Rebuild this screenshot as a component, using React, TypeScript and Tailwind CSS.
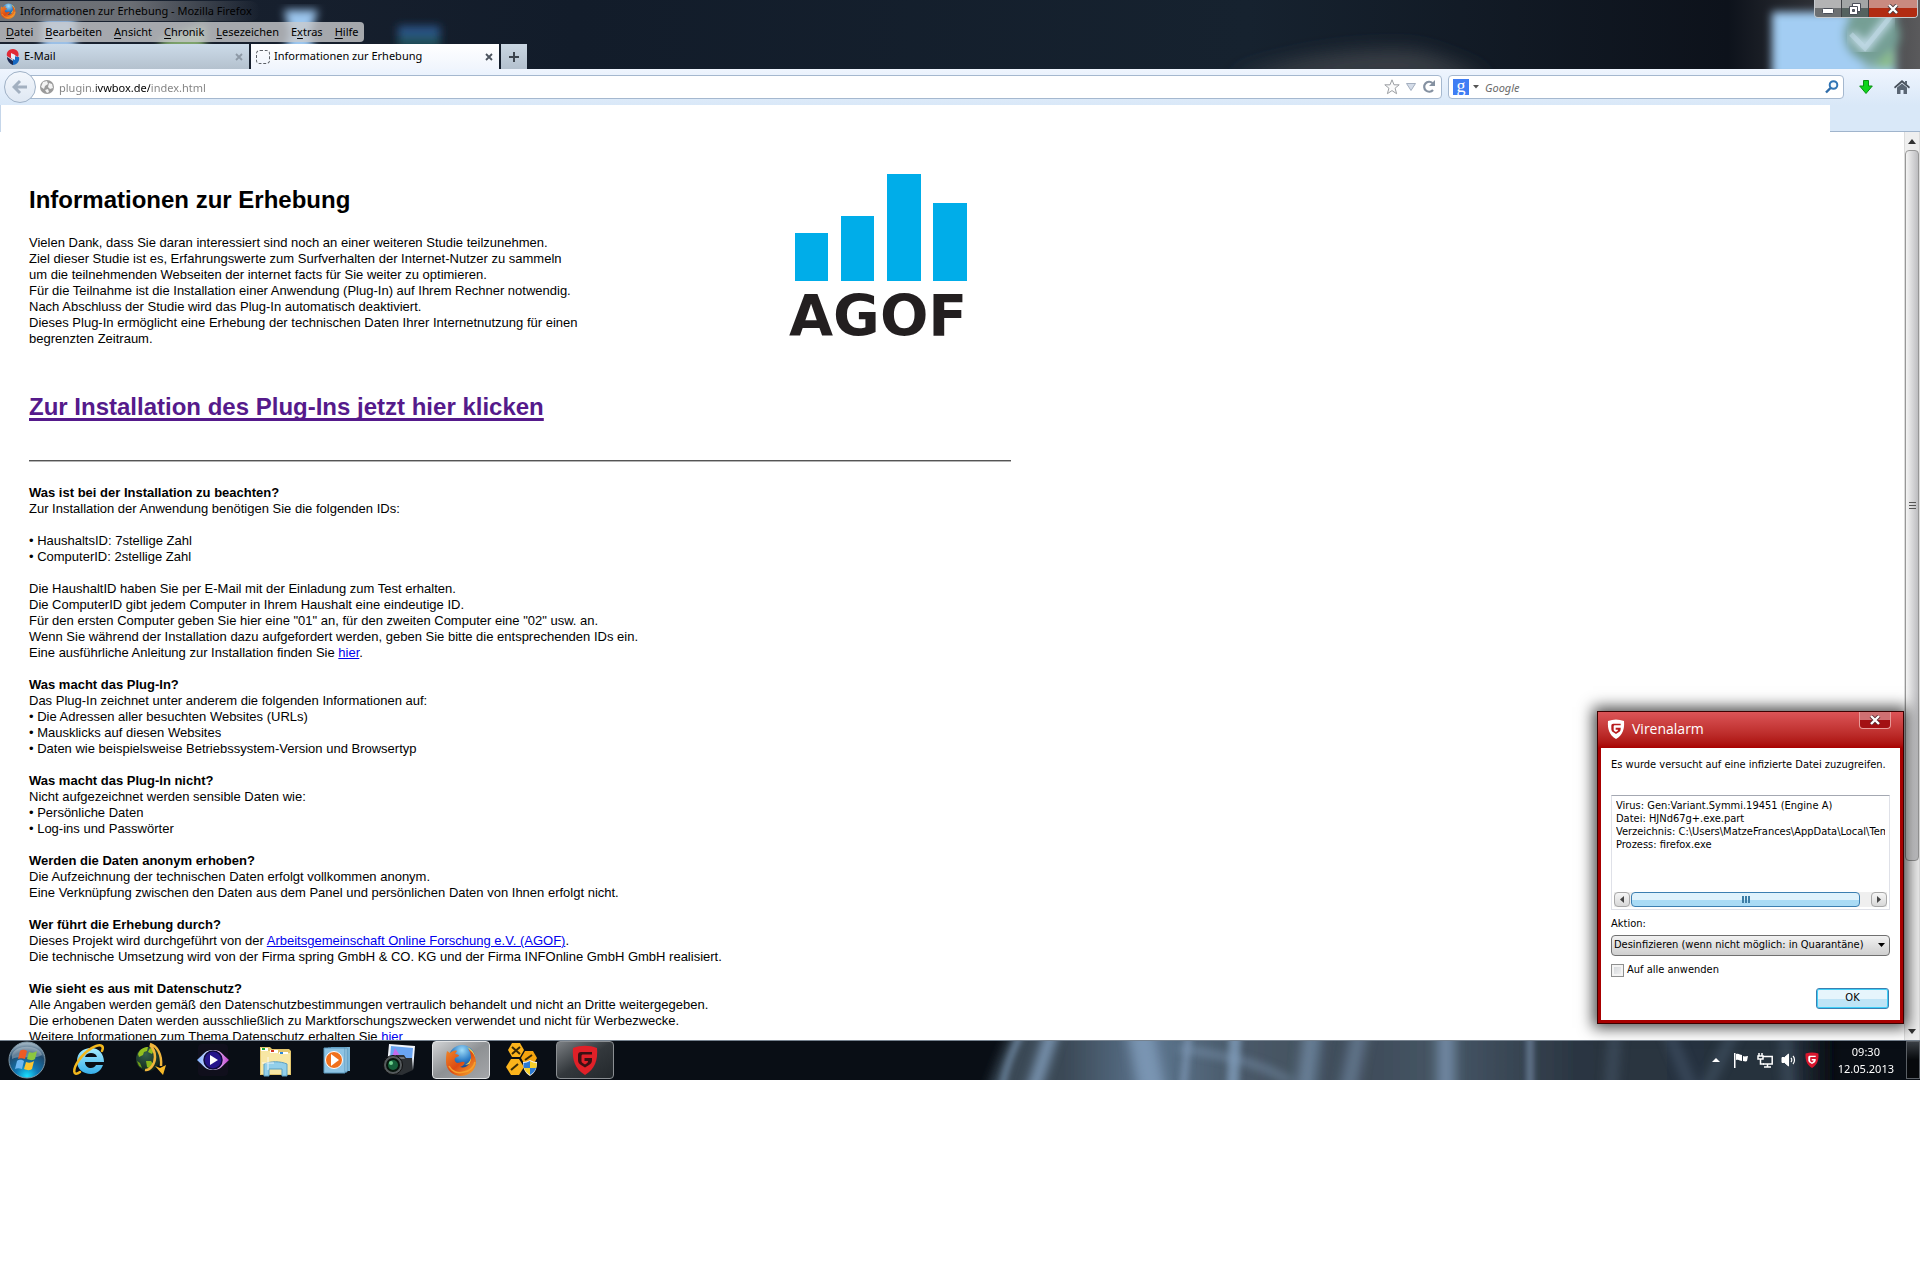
import { Fragment } from "react";
import type { ReactNode } from "react";

const menuItems = [
  { before: "", key: "D", rest: "atei" },
  { before: "", key: "B", rest: "earbeiten" },
  { before: "", key: "A", rest: "nsicht" },
  { before: "", key: "C", rest: "hronik" },
  { before: "", key: "L", rest: "esezeichen" },
  { before: "E", key: "x", rest: "tras" },
  { before: "", key: "H", rest: "ilfe" },
];

const virusDetails = [
  "Virus: Gen:Variant.Symmi.19451 (Engine A)",
  "Datei: HJNd67g+.exe.part",
  "Verzeichnis: C:\\Users\\MatzeFrances\\AppData\\Local\\Temp",
  "Prozess: firefox.exe",
].join("\n");

/* ---------- Icons ---------- */

function FirefoxIcon({ className }: { className: string }) {
  return (
    <svg viewBox="0 0 32 32" className={className} aria-hidden="true">
      <defs>
        <radialGradient id="ffGlobe" cx="0.5" cy="0.2" r="0.8">
          <stop offset="0" stopColor="#9fdcf8" />
          <stop offset="0.5" stopColor="#2f7fc8" />
          <stop offset="1" stopColor="#0a2c72" />
        </radialGradient>
        <linearGradient id="ffFox" x1="0" y1="0" x2="1" y2="1">
          <stop offset="0" stopColor="#f08a2a" />
          <stop offset="0.5" stopColor="#dd4a12" />
          <stop offset="1" stopColor="#f9b233" />
        </linearGradient>
      </defs>
      <circle cx="17" cy="14" r="13" fill="url(#ffGlobe)" />
      <path d="M22 3c4 3 5 7 4 11-1 4-4 6-6 7l9-2c3-6 0-13-7-16z" fill="#f8d24a" />
      <path
        d="M2 7l3 2c2-2 5-3 7-2l-2 3c3 0 4 1 4 2l-4 2c-1 2 0 4 2 5 3 0 5-2 7-1 2 1-1 4-4 5 6 2 11-3 11-9 0-4-1-7-3-9 5 3 8 8 8 13 0 8-7 14-15 14S1 26 1 18c0-4 0-7 1-11z"
        fill="url(#ffFox)"
      />
      <path d="M4 22c3 6 9 8 15 6 6-1 10-5 11-10" fill="none" stroke="#f6a02d" strokeWidth="1.500" />
    </svg>
  );
}

function GShield({ className, fill, mark }: { className: string; fill: string; mark: string }) {
  return (
    <svg viewBox="0 0 26 30" className={className} aria-hidden="true">
      <path d="M1 3C9 0 17 0 25 3c1 12-2 21-12 27C3 24 0 15 1 3z" fill={fill} />
      <path
        d="M20 9.500V7H9c-2 0-3 1-3 3v5c0 2 1 4 3 5l4 2.500 4-2.500c2-1 3-3 3-5v-2h-7.500v3H16c0 1-.5 2-1.500 2.500L13 19.500l-2-1.200c-1-.6-1.500-1.300-1.500-2.300v-5c0-1 .5-1.500 1.500-1.500z"
        fill={mark}
      />
    </svg>
  );
}

function StartOrb() {
  return (
    <svg viewBox="0 0 38 38" className="size-[38px]" aria-hidden="true">
      <defs>
        <radialGradient id="orb" cx="0.5" cy="0.95" r="0.9">
          <stop offset="0" stopColor="#18e0ff" />
          <stop offset="0.35" stopColor="#1178b4" />
          <stop offset="0.75" stopColor="#20496c" />
          <stop offset="1" stopColor="#9bb0bf" />
        </radialGradient>
      </defs>
      <circle cx="19" cy="19" r="18" fill="url(#orb)" stroke="#7f98a8" />
      <path d="M4 14C7 3 31 3 34 14c-8 5-22 0-30 4z" fill="#fff" opacity="0.3" />
      <path d="M12 10c3-2 5-1 7 0l-2 8c-3-1-5-1-7 0z" fill="#ee5a24" />
      <path d="M21 11c3 1 5 1 8-1l-2 8c-3 2-5 1-8 0z" fill="#8cc63f" />
      <path d="M9 20c3-2 5-1 7 0l-2 8c-3-1-5-1-7 0z" fill="#6db7f2" />
      <path d="M18 21c3 1 5 1 8-1l-2 8c-3 2-5 1-8 0z" fill="#fdc62f" />
    </svg>
  );
}

function ExplorerE() {
  return (
    <svg viewBox="0 0 36 36" className="size-9" aria-hidden="true">
      <defs>
        <linearGradient id="ie" x1="0" y1="0" x2="0" y2="1">
          <stop offset="0" stopColor="#a6ecff" />
          <stop offset="1" stopColor="#36aee9" />
        </linearGradient>
      </defs>
      <path
        d="M33 20H14c0 4 3 6 6 6 2 0 4-1 5-3h7c-2 6-7 9-12 9-8 0-14-5-14-13S12 6 20 6s13 6 13 14zm-7-5c-1-3-3-4-6-4s-5 1-6 4z"
        fill="url(#ie)"
      />
      <path
        d="M9 30C2 35 1 28 8 18 15 8 27 1 31 4c1 1 1 3 0 5"
        fill="none"
        stroke="#f2b71c"
        strokeWidth="2.500"
        strokeLinecap="round"
      />
    </svg>
  );
}

function DownloadManagerIcon() {
  return (
    <svg viewBox="0 0 36 36" className="size-9" aria-hidden="true">
      <defs>
        <radialGradient id="idm" cx="0.4" cy="0.3" r="0.7">
          <stop offset="0" stopColor="#35614b" />
          <stop offset="1" stopColor="#10261c" />
        </radialGradient>
      </defs>
      <circle cx="15" cy="17" r="12" fill="url(#idm)" />
      <path d="M5 12c2-5 6-7 10-7l-1 4-3 1-1 3-4 2z" fill="#93c01f" />
      <path d="M17 6l4 2-2 4-4-2z" fill="#93c01f" />
      <path d="M13 19l5 0 2 3-3 5-3-2z" fill="#86b41c" />
      <path d="M4 19l3 2 2 5-3-2z" fill="#6f9c17" />
      <path
        d="M12 28c5 1 10-6 10-13 0-5-2-9-5-12M17 2c7 2 12 10 11 22"
        fill="none"
        stroke="#f0b53c"
        strokeWidth="2.500"
      />
      <path d="M22 24l5 2 6-3-3 10z" fill="#f7b928" />
    </svg>
  );
}

function MediaEyeIcon() {
  return (
    <svg viewBox="0 0 36 36" className="size-9" aria-hidden="true">
      <defs>
        <linearGradient id="eye" x1="0" y1="0" x2="1" y2="0">
          <stop offset="0" stopColor="#7fb0ff" />
          <stop offset="0.5" stopColor="#f0ecff" />
          <stop offset="1" stopColor="#c43fd0" />
        </linearGradient>
      </defs>
      <rect x="3" y="2" width="30" height="32" rx="4" fill="#100f1c" />
      <path d="M2 18C9 12 10 8 18 8s9 4 16 10c-7 6-8 10-16 10S9 24 2 18z" fill="url(#eye)" />
      <circle cx="18" cy="18" r="9" fill="#25148a" stroke="#0e0a3c" strokeWidth="1.500" />
      <path d="M15 13v10l8-5z" fill="#fff" />
    </svg>
  );
}

function FolderIcon() {
  return (
    <svg viewBox="0 0 36 36" className="size-9" aria-hidden="true">
      <path d="M3 5h10l2 2h17l2 2v24H3z" fill="#e3c66d" />
      <path d="M4 9h9l2 2h18v21H4z" fill="#f8e7a4" />
      <path d="M4 6h7v3H4zM13 8h8v3h-8zM22 10h9v2h-9z" fill="#fff" />
      <path d="M5 6h3v2H5z" fill="#20a838" />
      <path d="M14 8h3v2h-3z" fill="#d33a24" />
      <path d="M23 10h3v2h-3z" fill="#2b86d9" />
      <path d="M7 22c7-3 16-3 23 0v12h-5v-7H12v7H7z" fill="#92cfea" stroke="#5b9fc2" />
      <path d="M11 15v13M5 21h12" stroke="#fff" opacity="0.8" />
    </svg>
  );
}

function PlayerIcon() {
  return (
    <svg viewBox="0 0 36 36" className="size-9" aria-hidden="true">
      <path d="M12 5h19v24H12z" fill="#79b4d6" />
      <path d="M9 6h19v24H9z" fill="#b6dcf0" stroke="#5b98bd" />
      <path d="M5 6h21v25H5z" fill="#8ec4e4" stroke="#5b98bd" />
      <circle cx="15" cy="18" r="8.500" fill="#f0701c" stroke="#fff" strokeWidth="1" />
      <path d="M12 12v12l8-6z" fill="#fff" />
    </svg>
  );
}

function CameraIcon() {
  return (
    <svg viewBox="0 0 36 36" className="size-9" aria-hidden="true">
      <path d="M8 2l26 2-2 24-26-4z" fill="#f1f5fb" />
      <path d="M10 4l22 2-1 12-22-2z" fill="#6aa5f2" />
      <path d="M14 6l6 9h-9z" fill="#c56bea" />
      <path d="M8 16h5l2-3h8l2 3h6l1 12-11 5-13-1z" fill="#2c3034" />
      <path d="M14 15h9l1 2H13z" fill="#6b7075" />
      <circle cx="12" cy="23" r="9.500" fill="#54595c" stroke="#0e0f10" />
      <circle cx="12" cy="23" r="7" fill="#08140d" />
      <circle cx="12" cy="23" r="5" fill="#15603a" />
      <circle cx="10" cy="21" r="2" fill="#6fd08e" />
    </svg>
  );
}

function HoneycombIcon() {
  return (
    <svg viewBox="0 0 36 36" className="size-9" aria-hidden="true">
      <path d="M7 1h8l4 7-4 7H7L3 8z" fill="#fbb31b" />
      <path d="M20 9h8l4 7-4 7h-8l-4-7z" fill="#f5a40e" />
      <path d="M6 17h8l5 8-5 8H6l-5-8z" fill="#fbb31b" />
      <path d="M7 5l8 7M15 5l-8 7M6 28l7-6M20 18l7-5" stroke="#3b2a05" strokeWidth="2" />
      <path d="M18 20c3 0 5-1 7-2 2 1 4 2 7 2 0 7-2 11-7 14-5-3-7-7-7-14z" fill="#f4f4f4" />
      <path d="M25 19v7h-6c-1-2 0-3-.5-5 3 0 4-1 6.500-2zM25 26h6c-1 3-3 5-6 7z" fill="#2d7bd4" />
      <path d="M25 19v7h6c1-2 .500-3 .500-5-3 0-4-1-6.500-2zM25 26h-6c1 3 3 5 6 7z" fill="#f7cf2c" />
    </svg>
  );
}

/* ---------- Browser chrome ---------- */

function AeroWallpaper() {
  return (
    <svg
      viewBox="0 0 1920 69"
      preserveAspectRatio="none"
      className="absolute inset-0 size-full"
      aria-hidden="true"
    >
      <defs>
        <linearGradient id="sky" x1="0" y1="0" x2="1" y2="0">
          <stop offset="0" stopColor="#1a2230" />
          <stop offset="0.3" stopColor="#121c2a" />
          <stop offset="0.65" stopColor="#16222f" />
          <stop offset="0.9" stopColor="#0d121b" />
          <stop offset="0.96" stopColor="#38393d" />
          <stop offset="1" stopColor="#5a5a5c" />
        </linearGradient>
        <filter id="soft">
          <feGaussianBlur stdDeviation="4" />
        </filter>
        <filter id="softer" x="-20%" y="-60%" width="140%" height="220%">
          <feGaussianBlur stdDeviation="10" />
        </filter>
      </defs>
      <rect width="1920" height="69" fill="url(#sky)" />
      <path d="M1230 80c60-24 150-34 190-28 30 8 50 18 70 28z" fill="#3a4147" filter="url(#softer)" />
      <g filter="url(#soft)">
        <path d="M42 16h34v50H42z" fill="#9cc0e6" />
        <path d="M160 40l46-16-2 36-44 8z" fill="#7da36c" />
        <path d="M284 10h34l-8 24 8 26h-38l10-26z" fill="#9cc6ee" />
        <path d="M398 26h42v10h-42z" fill="#2b5488" />
        <path d="M398 36h42v12h-42z" fill="#20515c" />
      </g>
      <g filter="url(#soft)">
        <rect x="1772" y="12" width="124" height="66" fill="#a3cdf3" />
        <path d="M1845 10h50v60h-30z" fill="#8fb7b9" />
        <circle cx="1872" cy="35" r="28" fill="#759f95" />
        <path d="M1880 60l14-12v20h-20z" fill="#8cbd8b" />
      </g>
      <path d="M1851 34l14 14 26-32" fill="none" stroke="#c3dcea" strokeWidth="9" filter="url(#soft)" />
      <path d="M1851 34l14 14 26-32" fill="none" stroke="#c3dcea" strokeWidth="5" opacity="0.5" />
    </svg>
  );
}

function WindowButtons() {
  return (
    <div className="mr-[2px] flex h-[18px] w-[104px] overflow-hidden rounded-b border border-t-0 border-[#c5c9cd]">
      <button
        aria-label="Minimieren"
        className="flex w-[27px] items-center justify-center border-r border-[#3d4044] bg-linear-to-b from-[#b3b3b4] from-50% to-[#6d7072] to-50%"
      >
        <svg viewBox="0 0 12 6" className="mt-1 h-[6px] w-3">
          <rect x="0.5" y="0.5" width="11" height="5" rx="1" fill="#fff" stroke="#4a4e58" />
        </svg>
      </button>
      <button
        aria-label="Verkleinern"
        className="flex w-[27px] items-center justify-center border-r border-[#3d4044] bg-linear-to-b from-[#a2a5a5] from-50% to-[#55625f] to-50%"
      >
        <svg viewBox="0 0 12 12" className="size-3" fill="#fff" stroke="#4a4e58">
          <path d="M3.500.5h8v8h-8z" />
          <path d="M.5 3.500h8v8h-8z" />
          <path d="M3.500 6.500h2v2h-2z" fill="#60666c" />
        </svg>
      </button>
      <button
        aria-label="Schließen"
        className="flex flex-1 items-center justify-center bg-linear-to-b from-[#c98a80] from-50% to-[#b12b12] to-50%"
      >
        <svg viewBox="0 0 12 10" className="h-[10px] w-3">
          <path d="M2 1l8 8M10 1L2 9" stroke="#4b3b40" strokeWidth="4" />
          <path d="M2 1l8 8M10 1L2 9" stroke="#fff" strokeWidth="2.400" />
        </svg>
      </button>
    </div>
  );
}

function TabClose({ color }: { color: string }) {
  return (
    <button aria-label="Tab schließen" className="flex size-4 items-center justify-center">
      <svg viewBox="0 0 8 8" className="size-2">
        <path d="M1 1l6 6M7 1L1 7" stroke={color} strokeWidth="1.800" />
      </svg>
    </button>
  );
}

function BrowserHeader() {
  return (
    <header className="relative h-[69px] shrink-0 overflow-hidden bg-[#121a26] text-[11px] text-black">
      <AeroWallpaper />
      <div className="relative flex h-full flex-col justify-between">
        <div className="flex h-[42px] items-start justify-between">
          <div>
            <div className="flex h-[22px] items-center">
              <div className="flex h-5 items-center gap-1 rounded-r-full bg-linear-to-r from-[#85878a]/80 via-[#808286]/80 to-transparent pr-2">
                <FirefoxIcon className="size-4" />
                <span>Informationen zur Erhebung - Mozilla Firefox</span>
              </div>
            </div>
            <nav className="flex h-5 items-center gap-3 rounded-r bg-[#c9cbcd]/80 px-[6px]">
              {menuItems.map((item) => (
                <button key={item.key}>
                  {item.before}
                  <span className="underline underline-offset-2">{item.key}</span>
                  {item.rest}
                </button>
              ))}
            </nav>
          </div>
          <WindowButtons />
        </div>

        {/* Tabs */}
        <div className="flex h-[25px] gap-[2px]">
          <div className="flex w-[249px] items-center gap-1 bg-linear-to-b from-[#ccdbe9] to-[#b4c1ce] pr-[2px] pl-[6px]">
            <svg viewBox="0 0 14 16" className="h-4 w-[14px]" aria-hidden="true">
              <path d="M7 0C2 0 0 4 1 7l5 3 1-5 5 3c2-4-1-8-5-8z" fill="#e02a36" />
              <path d="M13 8c1 4-2 8-6 8l-3-2 3-2V7l5 1z" fill="#1769c2" />
              <path d="M1 8l6 4v4c-3-1-6-4-6-8z" fill="#1b2a52" />
              <path d="M5 4l4 2v5L5 9z" fill="#e9f1fa" />
            </svg>
            <span className="flex-1">E-Mail</span>
            <TabClose color="#8d99a6" />
          </div>
          <div className="flex w-[248px] items-center gap-1 bg-linear-to-b from-white to-[#f0f5fd] pr-[2px] pl-[5px]">
            <span className="size-[14px] rounded-sm border border-dashed border-[#5c6066]" />
            <span className="flex-1">Informationen zur Erhebung</span>
            <TabClose color="#4c545e" />
          </div>
          <button
            aria-label="Neuer Tab"
            className="flex w-[26px] items-center justify-center bg-linear-to-b from-[#c9d6e2] to-[#b4c1ce]"
          >
            <svg viewBox="0 0 12 12" className="size-3">
              <path d="M6 1v10M1 6h10" stroke="#3c444d" strokeWidth="2" />
            </svg>
          </button>
        </div>
      </div>
    </header>
  );
}

function NavToolbar() {
  return (
    <div className="flex h-9 shrink-0 items-center bg-linear-to-b from-[#eff5fe] to-[#d9e8f8] pr-[10px] pl-1 text-[11px]">
      <button
        aria-label="Zurück"
        className="z-10 flex size-8 items-center justify-center rounded-full border border-[#9fb1c6] bg-linear-to-b from-[#f3f7fc] to-[#dfe8f3]"
      >
        <svg viewBox="0 0 16 16" className="size-4">
          <path d="M8 2L2 8l6 6M3 8h12" fill="none" stroke="#a3b0c0" strokeWidth="3" />
        </svg>
      </button>

      {/* Address bar */}
      <div className="-ml-2 flex h-6 flex-1 items-center rounded-r-sm border border-[#a5b8cf] bg-white pr-[5px] pl-[11px]">
        <svg viewBox="0 0 14 14" className="size-[14px]" aria-hidden="true">
          <circle cx="7" cy="7" r="7" fill="#9a9a9a" />
          <path d="M3 2l4-1 1 3-3 2-1 3-3-2zM9 3l3 1 1 4-3 1-2-2zM5 10l3-1 1 3-2 1z" fill="#f3f3f3" />
        </svg>
        <input
          type="text"
          aria-label="Adresse"
          defaultValue="plugin.ivwbox.de/index.html"
          className="ml-[5px] h-5 flex-1 bg-[linear-gradient(to_right,#808080_37px,#000_37px,#000_91px,#808080_91px)] bg-clip-text text-transparent outline-none"
        />
        <button aria-label="Lesezeichen setzen">
          <svg viewBox="0 0 16 16" className="size-4">
            <path
              d="M8 .8l2 5h5.200l-4.100 3.400 1.500 5.500L8 11.600l-4.600 3.100 1.500-5.500L.8 5.800H6z"
              fill="#fafafa"
              stroke="#9c9fa3"
            />
          </svg>
        </button>
        <button aria-label="Verlauf" className="mx-[6px]">
          <svg viewBox="0 0 10 8" className="h-2 w-[10px]">
            <path d="M.5.500h9L5 7.500z" fill="#d4dce8" stroke="#a4afbf" />
          </svg>
        </button>
        <button aria-label="Neu laden">
          <svg viewBox="0 0 14 14" className="size-[14px]">
            <path d="M11 10a5 5 0 1 1-.5-7" fill="none" stroke="#8591a1" strokeWidth="2.200" />
            <path d="M13 0v6H7z" fill="#8591a1" />
          </svg>
        </button>
      </div>

      {/* Search bar */}
      <div className="ml-[6px] flex h-6 w-[396px] items-center rounded-sm border border-[#a5b8cf] bg-white px-1">
        <span className="flex size-4 items-center justify-center bg-[#3f7df4] pb-[2px] font-['Liberation_Serif',serif] text-lg leading-4 text-white">
          g
        </span>
        <button aria-label="Suchmaschine" className="mx-1">
          <svg viewBox="0 0 6 4" className="h-1 w-[6px]">
            <path d="M0 0h6L3 3.500z" fill="#555" />
          </svg>
        </button>
        <input
          type="search"
          aria-label="Suche"
          placeholder="Google"
          className="ml-[2px] h-5 flex-1 italic outline-none placeholder:text-[#6b6b6b]"
        />
        <button aria-label="Suchen">
          <svg viewBox="0 0 14 14" className="size-[14px]">
            <circle cx="8.500" cy="5" r="3.800" fill="#f4faff" stroke="#2f74b5" strokeWidth="2" />
            <path d="M5.500 8L1 12.500" stroke="#2f6ca8" strokeWidth="2.400" />
          </svg>
        </button>
      </div>

      <button aria-label="Downloads" className="ml-[15px]">
        <svg viewBox="0 0 14 14" className="size-[14px]">
          <path d="M4.500.5h5V6h3.800L7 13.500.7 6h3.800z" fill="#0fd51c" stroke="#0a8f13" />
        </svg>
      </button>
      <button aria-label="Startseite" className="ml-[21px]">
        <svg viewBox="0 0 16 14" className="h-[14px] w-4">
          <path d="M8 0l8 7-1 1.500L8 2.500l-7 6L0 7z" fill="#454e59" />
          <path d="M11 1h2v4l-2-2zM3 7.500L8 3.500l5 4V14H9.500v-4h-3v4H3z" fill="#5a6674" />
        </svg>
      </button>
    </div>
  );
}

/* ---------- Page ---------- */

function Section({ title, children }: { title: string; children: ReactNode }) {
  return (
    <section>
      <h3 className="font-bold">{title}</h3>
      {children}
    </section>
  );
}

function Lines({ lines }: { lines: string[] }) {
  return (
    <p>
      {lines.map((line) => (
        <Fragment key={line}>
          {line}
          <br />
        </Fragment>
      ))}
    </p>
  );
}

function AgofLogo() {
  return (
    <svg viewBox="0 0 184 180" className="h-[180px] w-[184px]" role="img" aria-label="AGOF">
      <g fill="#00ade9">
        <rect x="7" y="59" width="33" height="48" />
        <rect x="53" y="42" width="33" height="65" />
        <rect x="99" y="0" width="34" height="107" />
        <rect x="145" y="29" width="34" height="78" />
      </g>
      <text x="1" y="162" fontSize="57" fontWeight="bold" fill="#231f20" fontFamily="'DejaVu Sans', sans-serif">
        AGOF
      </text>
    </svg>
  );
}

function PageContent() {
  return (
    <main className="min-w-0 flex-1 overflow-hidden pl-[29px] font-['Liberation_Sans',Arial,sans-serif] text-[13px] leading-4 text-black">
      <div className="w-[982px]">
        <div className="flex justify-between">
          <div className="pt-[54px]">
            <h1 className="mb-[21px] text-2xl leading-7 font-bold">Informationen zur Erhebung</h1>
            <Lines
              lines={[
                "Vielen Dank, dass Sie daran interessiert sind noch an einer weiteren Studie teilzunehmen.",
                "Ziel dieser Studie ist es, Erfahrungswerte zum Surfverhalten der Internet-Nutzer zu sammeln",
                "um die teilnehmenden Webseiten der internet facts für Sie weiter zu optimieren.",
                "Für die Teilnahme ist die Installation einer Anwendung (Plug-In) auf Ihrem Rechner notwendig.",
                "Nach Abschluss der Studie wird das Plug-In automatisch deaktiviert.",
                "Dieses Plug-In ermöglicht eine Erhebung der technischen Daten Ihrer Internetnutzung für einen",
                "begrenzten Zeitraum.",
              ]}
            />
          </div>
          <div className="pt-[42px] pr-[39px]">
            <AgofLogo />
          </div>
        </div>

        <h2 className="mt-[39px] text-2xl leading-7 font-bold">
          <a
            href="#install"
            className="text-[#551a8b] underline decoration-3 underline-offset-3 [text-decoration-skip-ink:none]"
          >
            Zur Installation des Plug-Ins jetzt hier klicken
          </a>
        </h2>
        <hr className="mt-[39px] mb-[23px] h-[2px] border-t border-[#555] bg-[#b4b4b4]" />

        <div className="flex flex-col gap-4">
          <Section title="Was ist bei der Installation zu beachten?">
            <Lines lines={["Zur Installation der Anwendung benötigen Sie die folgenden IDs:"]} />
          </Section>
          <Lines lines={["• HaushaltsID: 7stellige Zahl", "• ComputerID: 2stellige Zahl"]} />
          <p>
            Die HaushaltID haben Sie per E-Mail mit der Einladung zum Test erhalten.
            <br />
            Die ComputerID gibt jedem Computer in Ihrem Haushalt eine eindeutige ID.
            <br />
            Für den ersten Computer geben Sie hier eine "01" an, für den zweiten Computer eine "02" usw. an.
            <br />
            Wenn Sie während der Installation dazu aufgefordert werden, geben Sie bitte die entsprechenden IDs ein.
            <br />
            Eine ausführliche Anleitung zur Installation finden Sie{" "}
            <a href="#anleitung" className="text-[#0000ee] underline">
              hier
            </a>
            .
          </p>
          <Section title="Was macht das Plug-In?">
            <Lines
              lines={[
                "Das Plug-In zeichnet unter anderem die folgenden Informationen auf:",
                "• Die Adressen aller besuchten Websites (URLs)",
                "• Mausklicks auf diesen Websites",
                "• Daten wie beispielsweise Betriebssystem-Version und Browsertyp",
              ]}
            />
          </Section>
          <Section title="Was macht das Plug-In nicht?">
            <Lines
              lines={[
                "Nicht aufgezeichnet werden sensible Daten wie:",
                "• Persönliche Daten",
                "• Log-ins und Passwörter",
              ]}
            />
          </Section>
          <Section title="Werden die Daten anonym erhoben?">
            <Lines
              lines={[
                "Die Aufzeichnung der technischen Daten erfolgt vollkommen anonym.",
                "Eine Verknüpfung zwischen den Daten aus dem Panel und persönlichen Daten von Ihnen erfolgt nicht.",
              ]}
            />
          </Section>
          <Section title="Wer führt die Erhebung durch?">
            <p>
              Dieses Projekt wird durchgeführt von der{" "}
              <a href="#agof" className="text-[#0000ee] underline">
                Arbeitsgemeinschaft Online Forschung e.V. (AGOF)
              </a>
              .
              <br />
              Die technische Umsetzung wird von der Firma spring GmbH & CO. KG und der Firma INFOnline GmbH GmbH
              realisiert.
            </p>
          </Section>
          <Section title="Wie sieht es aus mit Datenschutz?">
            <p>
              Alle Angaben werden gemäß den Datenschutzbestimmungen vertraulich behandelt und nicht an Dritte
              weitergegeben.
              <br />
              Die erhobenen Daten werden ausschließlich zu Marktforschungszwecken verwendet und nicht für Werbezwecke.
              <br />
              Weitere Informationen zum Thema Datenschutz erhalten Sie{" "}
              <a href="#datenschutz" className="text-[#0000ee] underline">
                hier
              </a>
            </p>
          </Section>
        </div>
      </div>
    </main>
  );
}

function PageScrollbar() {
  return (
    <div className="flex w-4 flex-col items-center border-r border-l border-[#dcdcdc] bg-[#efefef]">
      <div className="flex h-[18px] items-center">
        <svg viewBox="0 0 8 5" className="h-[5px] w-2">
          <path d="M0 5h8L4 0z" fill="#333" />
        </svg>
      </div>
      <div className="flex w-full basis-[711px] items-center justify-center rounded-sm border border-[#979797] bg-linear-to-r from-[#f4f4f4] to-[#bdbdc0]">
        <span className="h-[7px] w-[7px] border-y border-[#555]">
          <span className="mt-[2px] block h-px bg-[#555]" />
        </span>
      </div>
      <div className="mt-auto flex h-[18px] items-center">
        <svg viewBox="0 0 8 5" className="h-[5px] w-2">
          <path d="M0 0h8L4 5z" fill="#333" />
        </svg>
      </div>
    </div>
  );
}

/* ---------- Virus dialog ---------- */

function ScrollArrow({ label, d }: { label: string; d: string }) {
  return (
    <button
      aria-label={label}
      className="flex h-[15px] w-4 items-center justify-center rounded-sm border border-[#a8a8a8] bg-linear-to-b from-[#f6f6f6] to-[#d8d8d8]"
    >
      <svg viewBox="0 0 4 7" className="h-[7px] w-1">
        <path d={d} fill="#444" />
      </svg>
    </button>
  );
}

function VirusDialog() {
  return (
    <div
      role="dialog"
      aria-label="Virenalarm"
      className="absolute right-4 bottom-14 flex h-[313px] w-[307px] flex-col border border-[#3c0000] bg-[#a80000] px-[3px] pb-[3px] font-['DejaVu_Sans_Condensed','DejaVu_Sans',sans-serif] text-[11px] text-black shadow-[0_0_14px_4px_rgba(0,0,0,0.7)]"
    >
      <div className="-mx-[3px] flex h-9 shrink-0 items-start bg-linear-to-b from-[#dc5457] to-[#a80000] pr-3 pl-[9px]">
        <GShield className="mt-[7px] h-5 w-[18px]" fill="#fff" mark="#b81c1e" />
        <h2 className="mt-[7px] ml-[7px] flex-1 font-['Open_Sans',sans-serif] text-sm leading-5 text-white">
          Virenalarm
        </h2>
        <button
          aria-label="Schließen"
          className="flex h-[17px] w-8 items-center justify-center rounded-b border border-t-0 border-[#e79a98] bg-linear-to-b from-[#cf7072] from-50% to-[#a31013] to-50%"
        >
          <svg viewBox="0 0 12 10" className="h-[10px] w-3">
            <path d="M2 1l8 8M10 1L2 9" stroke="#5b2a30" strokeWidth="4" />
            <path d="M2 1l8 8M10 1L2 9" stroke="#fff" strokeWidth="2.400" />
          </svg>
        </button>
      </div>

      <div className="flex flex-1 flex-col bg-white px-[10px] pt-[9px]">
        <p className="leading-4">Es wurde versucht auf eine infizierte Datei zuzugreifen.</p>

        <div className="mt-[22px] flex h-[115px] flex-col border border-[#dfe1e8] border-t-[#a4a8b2] px-[2px] pb-[2px]">
          <textarea
            readOnly
            wrap="off"
            aria-label="Details"
            defaultValue={virusDetails}
            className="mx-[2px] mt-[3px] flex-1 resize-none overflow-hidden leading-[13px] outline-none"
          />
          <div className="flex h-[15px] bg-[#efefef]">
            <ScrollArrow label="Nach links" d="M4 0v7L0 3.500z" />
            <div className="ml-px flex w-[229px] items-center justify-center gap-px rounded-sm border border-[#3c7fb1] bg-linear-to-b from-[#dff2fc] from-50% to-[#a9dbf5] to-50%">
              <span className="h-[7px] w-[2px] bg-[#3d7ea6]" />
              <span className="h-[7px] w-[2px] bg-[#3d7ea6]" />
              <span className="h-[7px] w-[2px] bg-[#3d7ea6]" />
            </div>
            <div className="ml-auto">
              <ScrollArrow label="Nach rechts" d="M0 0v7l4-3.500z" />
            </div>
          </div>
        </div>

        <label htmlFor="aktion" className="mt-[6px] leading-4">
          Aktion:
        </label>
        <div className="relative mt-[3px]">
          <select
            id="aktion"
            className="block h-[21px] w-full appearance-none rounded-sm border border-[#707070] bg-linear-to-b from-[#f2f2f2] to-[#cfcfcf] pl-[2px] outline-none"
          >
            <option>Desinfizieren (wenn nicht möglich: in Quarantäne)</option>
          </select>
          <svg viewBox="0 0 7 4" className="pointer-events-none absolute top-2 right-[5px] h-1 w-[7px]">
            <path d="M0 0h7L3.500 4z" fill="#000" />
          </svg>
        </div>
        <label className="mt-[6px] flex items-center gap-[3px] leading-4">
          <input
            type="checkbox"
            className="size-[13px] appearance-none border border-[#8e8f8f] bg-linear-to-br from-[#cfd2d6] to-[#f6f6f6] shadow-[inset_0_0_0_2px_#f4f4f4]"
          />
          Auf alle anwenden
        </label>
        <button className="mt-[10px] mr-px h-[21px] w-[73px] self-end rounded-[3px] border border-[#3c7fb1] bg-linear-to-b from-[#e6f5fc] from-50% to-[#bfe4f6] to-50% shadow-[inset_0_0_0_1px_#3fd0f8]">
          OK
        </button>
      </div>
    </div>
  );
}

/* ---------- Taskbar ---------- */

const pinned = [
  { label: "Internet Explorer", icon: <ExplorerE /> },
  { label: "Download Manager", icon: <DownloadManagerIcon /> },
  { label: "Media Suite", icon: <MediaEyeIcon /> },
  { label: "Explorer", icon: <FolderIcon /> },
  { label: "Media Player", icon: <PlayerIcon /> },
  { label: "Kamera", icon: <CameraIcon /> },
  {
    label: "Firefox",
    icon: <FirefoxIcon className="size-8" />,
    frame: "border-[#e2e4e6] bg-linear-to-br from-[#d2d4d6] via-[#8e9194] to-[#a4a6a9]",
  },
  { label: "Tuning", icon: <HoneycombIcon /> },
  {
    label: "Virenschutz",
    icon: <GShield className="h-[30px] w-[26px]" fill="#e02028" mark="#3a1114" />,
    frame: "border-[#8b8f93] bg-linear-to-br from-[#7c8084] via-[#33383c] to-[#23282c]",
  },
];

function TaskbarBackdrop() {
  return (
    <svg
      viewBox="0 0 1920 40"
      preserveAspectRatio="none"
      className="absolute inset-0 size-full"
      aria-hidden="true"
    >
      <defs>
        <linearGradient id="smoke" x1="0" y1="0" x2="1" y2="0">
          <stop offset="0" stopColor="#394856" />
          <stop offset="0.1" stopColor="#3b4956" />
          <stop offset="0.2" stopColor="#5d7690" />
          <stop offset="0.3" stopColor="#4a5a69" />
          <stop offset="0.45" stopColor="#3f4c59" />
          <stop offset="0.55" stopColor="#465666" />
          <stop offset="0.7" stopColor="#2b3642" />
          <stop offset="0.96" stopColor="#25303c" />
          <stop offset="1" stopColor="#090d12" />
        </linearGradient>
        <filter id="smokeBlur" filterUnits="userSpaceOnUse" x="900" y="-40" width="1020" height="120">
          <feGaussianBlur stdDeviation="6 3" />
        </filter>
        <filter id="wispBlur" filterUnits="userSpaceOnUse" x="900" y="-40" width="1020" height="120">
          <feGaussianBlur stdDeviation="3 3" />
        </filter>
      </defs>
      <rect width="1920" height="40" fill="#090e15" />
      <path d="M1024-30h806v100h-850c12-30 24-70 44-100z" fill="url(#smoke)" filter="url(#smokeBlur)" />
      <g fill="none" stroke="#819dbb" filter="url(#smokeBlur)">
        <path d="M1030 60l26-80" strokeWidth="12" />
        <path d="M1138-20l16 80" strokeWidth="26" opacity="0.8" />
        <path d="M1180 8c30 6 80 12 110 34" strokeWidth="10" opacity="0.35" />
        <path d="M1304 60l10-80" strokeWidth="18" opacity="0.6" />
        <path d="M1346 60l16-80" strokeWidth="16" opacity="0.5" />
        <path d="M1446-20v80" strokeWidth="18" opacity="0.7" />
        <path d="M1616-20l-6 80M1668-10l24 60M1735-10l-30 60M1784-20l6 80" strokeWidth="10" opacity="0.25" />
      </g>
      <g fill="none" stroke="#819dbb" filter="url(#wispBlur)">
        <path d="M1000 60c4-30 12-50 28-80" strokeWidth="5" opacity="0.8" />
        <path d="M1182 60l8-80" strokeWidth="7" opacity="0.7" />
        <path d="M1236-20l-4 80" strokeWidth="12" opacity="0.8" />
        <path d="M1530-20v80" strokeWidth="6" opacity="0.7" />
      </g>
    </svg>
  );
}

function Taskbar() {
  return (
    <footer className="relative flex h-10 shrink-0 overflow-hidden bg-[#090e15] text-[11px] text-white">
      <TaskbarBackdrop />
      <div className="relative flex w-full items-stretch border-t border-[#76828f] pb-px">
        <button aria-label="Start" className="mr-1 flex w-14 items-center justify-center pr-[2px]">
          <StartOrb />
        </button>
        <div className="flex gap-1">
          {pinned.map((app) => (
            <button
              key={app.label}
              aria-label={app.label}
              className={`flex w-[58px] items-center justify-center rounded-sm border ${
                app.frame ?? "border-transparent"
              }`}
            >
              {app.icon}
            </button>
          ))}
        </div>

        {/* Tray */}
        <div className="ml-auto flex items-center">
          <button aria-label="Ausgeblendete Symbole">
            <svg viewBox="0 0 8 4" className="h-1 w-2">
              <path d="M4 0l4 4H0z" fill="#fff" />
            </svg>
          </button>
          <svg viewBox="0 0 16 16" className="ml-[13px] size-4" fill="#fff" aria-hidden="true">
            <path d="M1 1h1.500v15H1zM3 2c3-1 4 1 6 1v6C7 9 6 7 3 8zM10 4c2 1 3 0 5 0l-1 5c-1 1-3 0-4 0z" />
          </svg>
          <svg viewBox="0 0 16 16" className="ml-2 size-4" fill="none" stroke="#fff" aria-hidden="true">
            <path d="M6 4.500h9.200v7.500H6" strokeWidth="1.500" />
            <path d="M7 15h7M10.500 12v3M2 1v3M5 1v3M1 4h5v3H1zM3.500 7v5H7" strokeWidth="1.500" />
          </svg>
          <svg viewBox="0 0 16 16" className="ml-2 size-4" fill="none" stroke="#fff" aria-hidden="true">
            <path d="M1 5.500h2.500L7.500 2v12l-4-3.500H1z" fill="#fff" />
            <path d="M10 6c1 1 1 3 0 4M12 4c2 2 2 6 0 8" strokeWidth="1.200" />
          </svg>
          <div className="ml-2">
            <GShield className="h-4 w-[14px]" fill="#d9162e" mark="#fff" />
          </div>
          <time className="ml-[19px] block text-center leading-[17px]">
            09:30
            <br />
            12.05.2013
          </time>
          <button
            aria-label="Desktop anzeigen"
            className="ml-3 h-full w-[14px] border border-[#5b6066] bg-linear-to-b from-[#3a3f45] to-[#07090c] to-50%"
          />
        </div>
      </div>
    </footer>
  );
}

export default function App() {
  return (
    <div className="min-h-screen bg-white font-['Noto_Sans','Open_Sans',sans-serif]">
      <div className="relative flex aspect-video w-full flex-col overflow-hidden">
        <BrowserHeader />
        <NavToolbar />
        <div className="flex h-[27px] shrink-0">
          <div className="flex-1 border-l border-[#c5d6ea] bg-white" />
          <div className="w-[90px] border-b border-[#a0b4cc] bg-[#d9e8f8]" />
        </div>
        <div className="flex min-h-0 flex-1">
          <PageContent />
          <PageScrollbar />
        </div>
        <Taskbar />
        <VirusDialog />
      </div>
    </div>
  );
}
